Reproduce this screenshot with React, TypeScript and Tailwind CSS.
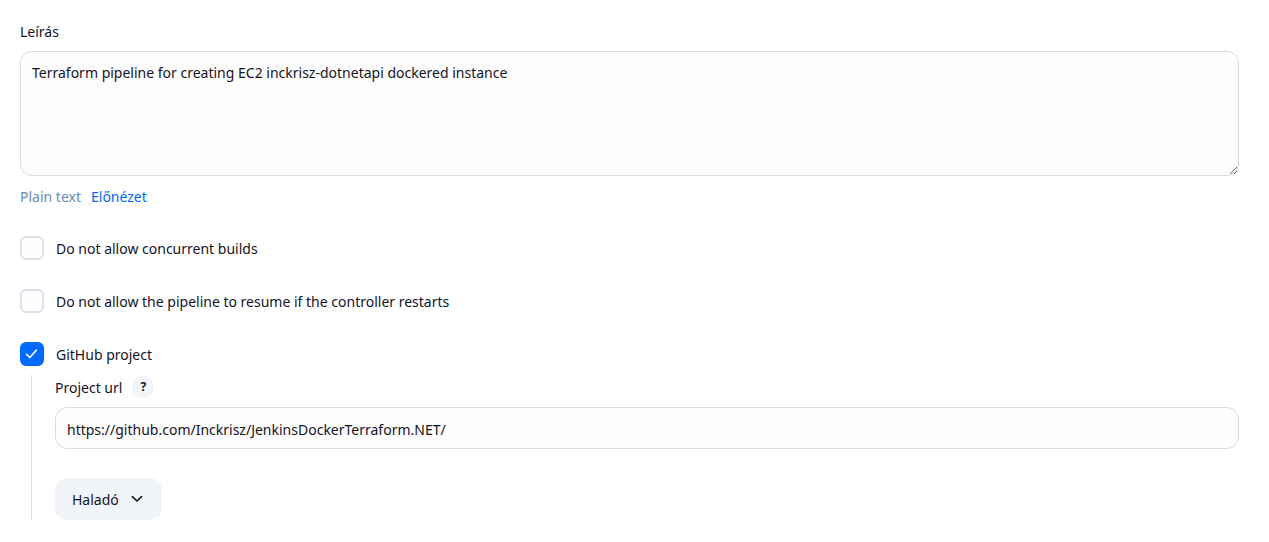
import { useState } from "react";

type CheckOptionProps = {
  id: string;
  label: string;
  checked: boolean;
  onChange: (checked: boolean) => void;
};

function CheckOption({ id, label, checked, onChange }: CheckOptionProps) {
  return (
    <div className="flex h-6 items-center gap-3">
      <span className="grid size-6 shrink-0">
        <input
          id={id}
          type="checkbox"
          checked={checked}
          onChange={(e) => onChange(e.target.checked)}
          className="peer col-start-1 row-start-1 size-6 appearance-none rounded-md border-2 border-[#dcdfec] bg-[#fdfdfd] checked:border-[#006aff] checked:bg-[#006aff]"
        />
        <svg
          viewBox="0 0 24 24"
          className="pointer-events-none invisible col-start-1 row-start-1 size-6 peer-checked:visible"
          fill="none"
          stroke="#fff"
          strokeWidth="1.7"
          strokeLinecap="round"
          strokeLinejoin="round"
          aria-hidden="true"
        >
          <path d="M6.7 12.3l3.1 3.2 6.5-7.3" />
        </svg>
      </span>
      <label htmlFor={id} className="pt-0.5">
        {label}
      </label>
    </div>
  );
}

export default function App() {
  const [description, setDescription] = useState(
    "Terraform pipeline for creating EC2 inckrisz-dotnetapi dockered instance",
  );
  const [url, setUrl] = useState("https://github.com/Inckrisz/JenkinsDockerTerraform.NET/");
  const [noConcurrent, setNoConcurrent] = useState(false);
  const [noResume, setNoResume] = useState(false);
  const [github, setGithub] = useState(true);

  return (
    <form className="bg-white pt-5 pr-[30px] pb-5 pl-5 font-['Noto_Sans','Open_Sans',sans-serif] text-sm leading-6 text-[#14141f]">
      <div className="flex flex-col">
        <label htmlFor="description" className="mb-[7px]">
          Leírás
        </label>
        <textarea
          id="description"
          value={description}
          onChange={(e) => setDescription(e.target.value)}
          className="h-[125px] w-full resize-y rounded-xl border border-[#d5dbe9] bg-[#fdfdfd] px-[11px] py-[9px] outline-none"
        />
        <div className="mt-[9px] flex gap-2.5">
          <span className="text-[#6b8bb3]">Plain text</span>
          <a href="#preview" className="text-[#006aff]">
            Előnézet
          </a>
        </div>
      </div>

      <div className="mt-[27px] flex flex-col gap-[29px]">
        <CheckOption
          id="concurrent"
          label="Do not allow concurrent builds"
          checked={noConcurrent}
          onChange={setNoConcurrent}
        />
        <CheckOption
          id="resume"
          label="Do not allow the pipeline to resume if the controller restarts"
          checked={noResume}
          onChange={setNoResume}
        />
        <CheckOption id="github" label="GitHub project" checked={github} onChange={setGithub} />
      </div>

      <div className="mt-[9px] ml-[11px] border-l border-[#d9dfeb] pl-[23px]">
        <div className="flex h-6 items-center gap-2.5">
          <label htmlFor="project-url" className="pt-0.5">
            Project url
          </label>
          <button
            type="button"
            aria-label="Help for Project url"
            className="grid size-[22px] place-items-center rounded-full bg-[#f1f5f9] text-xs font-bold"
          >
            ?
          </button>
        </div>
        <input
          id="project-url"
          type="text"
          value={url}
          onChange={(e) => setUrl(e.target.value)}
          className="mt-2 block h-[42px] w-full rounded-xl border border-[#d5dbe9] bg-[#fdfdfd] px-[11px] pt-0.5 outline-none"
        />
        <button
          type="button"
          className="mt-[29px] flex h-[42px] items-center gap-2.5 rounded-xl bg-[#f1f5f9] px-[17px]"
        >
          <span className="pt-0.5">Haladó</span>
          <svg
            viewBox="0 0 16 16"
            className="size-4"
            fill="none"
            stroke="currentColor"
            strokeWidth="1.6"
            strokeLinecap="round"
            strokeLinejoin="round"
            aria-hidden="true"
          >
            <path d="M3.4 5.6L8 10l4.6-4.4" />
          </svg>
        </button>
      </div>
    </form>
  );
}
